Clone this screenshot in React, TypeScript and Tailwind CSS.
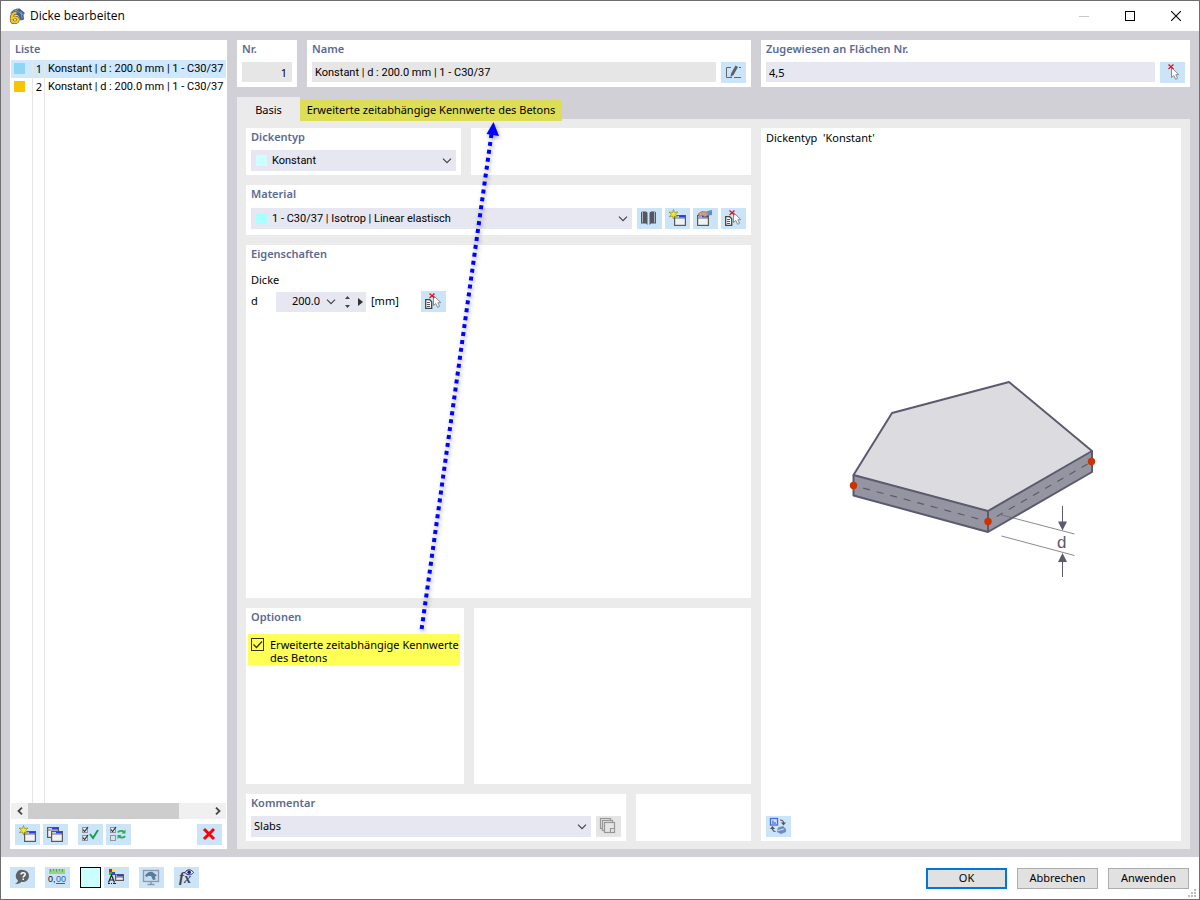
import { useState, type ReactNode } from "react";
import clsx from "clsx";

const THICKNESSES = [
	{ id: 1, color: "#8fd6f5", name: "Konstant | d : 200.0 mm | 1 - C30/37" },
	{ id: 2, color: "#f7c400", name: "Konstant | d : 200.0 mm | 1 - C30/37" },
];

function Panel({
	className,
	children,
}: {
	className?: string;
	children?: ReactNode;
}) {
	return (
		<section className={clsx("bg-white px-[5px] pt-px", className)}>
			{children}
		</section>
	);
}

function Caption({ htmlFor, children }: { htmlFor?: string; children: ReactNode }) {
	const style = "block leading-4 font-semibold text-[#5a6a92]";
	return htmlFor ? (
		<label htmlFor={htmlFor} className={style}>
			{children}
		</label>
	) : (
		<h2 className={style}>{children}</h2>
	);
}

function IconButton({
	label,
	disabled,
	children,
}: {
	label: string;
	disabled?: boolean;
	children: ReactNode;
}) {
	return (
		<button
			type="button"
			aria-label={label}
			disabled={disabled}
			className={clsx(
				"block h-[21px] w-[25px] shrink-0",
				disabled ? "bg-[#e5e5e5]" : "bg-[#cce4f7] hover:bg-[#b5d9f5]",
			)}
		>
			<svg viewBox="0 0 25 21" width="25" height="21" fill="none">
				{children}
			</svg>
		</button>
	);
}

function Chevron({ className }: { className?: string }) {
	return (
		<svg
			viewBox="0 0 10 6"
			fill="none"
			stroke="#444"
			strokeWidth="1.2"
			className={clsx("pointer-events-none h-[6px] w-[10px]", className)}
		>
			<path d="M1 .7l4 4 4-4" />
		</svg>
	);
}

function Combo({
	id,
	value,
	swatch,
}: {
	id: string;
	value: string;
	swatch?: string;
}) {
	return (
		<div className="relative min-w-0 flex-1">
			<select
				id={id}
				className={clsx(
					"block h-[21px] w-full appearance-none bg-[#e7e7f2] pr-5 outline-none",
					swatch ? "pt-px pl-[21px] font-[Roboto,sans-serif]" : "pl-[3px]",
				)}
			>
				<option>{value}</option>
			</select>
			{swatch && (
				<span
					className="pointer-events-none absolute top-[5px] left-[5px] size-[11px]"
					style={{ backgroundColor: swatch }}
				/>
			)}
			<Chevron className="absolute top-2 right-1" />
		</div>
	);
}

/* icon parts */

function Cursor({ x, y }: { x: number; y: number }) {
	return (
		<path
			transform={`translate(${x} ${y})`}
			d="M.5.5v10l2.3-2 1.8 3.8 2-1-1.7-3.6h3z"
			fill="#fff"
			stroke="#858b93"
			strokeWidth="1"
		/>
	);
}

function RedCross() {
	return <path d="M8.5 2.5l5 4.5M13.5 2.5l-5 4.5" stroke="#e4131b" strokeWidth="1.3" />;
}

function MiniWindow({ x, y, w = 12, h = 11 }: { x: number; y: number; w?: number; h?: number }) {
	return (
		<g transform={`translate(${x} ${y})`}>
			<rect x=".6" y=".6" width={w - 1.2} height={h - 1.2} fill="#f1f2f4" stroke="#5a5a5a" strokeWidth="1.2" />
			<path d={`M${w - 7} 1.5h6`} stroke="#2a3cf0" strokeWidth="1.8" />
			<path d={`M1 3h${w - 2}`} stroke="#5a5a5a" strokeWidth=".9" />
		</g>
	);
}

function Star() {
	return (
		<path
			d="M8.5 1.5l1 3 3.5-.6-2.5 2.4 2 2.4-2.9-.7-1.1 3-1-3-3.2.8 2-2.5L4 4l3.5.5z"
			fill="#ffee00"
			stroke="#8d8a35"
			strokeWidth=".7"
		/>
	);
}

function SheetPick() {
	return (
		<>
			<path d="M4.7 8.7h4l2 2v6.6h-6z" fill="#fff" stroke="#444" strokeWidth="1.3" />
			<path d="M6 11.5h3M6 13.5h3M6 15.5h3" stroke="#555" />
			<Cursor x={12} y={4} />
			<RedCross />
		</>
	);
}

function TickBox({ y, checked }: { y: number; checked?: boolean }) {
	return (
		<g transform={`translate(4 ${y})`}>
			<rect x=".5" y=".5" width="5" height="5" fill={checked ? "#dbe9f5" : "#d3e3f0"} stroke="#8f979e" />
			{checked && <path d="M1 2.5l1.6 2L6 0" stroke="#333" strokeWidth="1.2" />}
		</g>
	);
}

function AppLogo() {
	return (
		<svg viewBox="0 0 16 16" width="16" height="16" fill="none">
			<path d="M1 5.5C3.500 1.500 7.500 0 10.500.5L16 5l-1.500 1.500.5 5-3.500 1-2-4.500L4 5z" fill="#3f6296" />
			<path d="M2 4.500l7-3M6 2l8 4.500M12 3.500l1 7" stroke="#91a7c7" strokeWidth=".8" />
			<path
				d="M7.500 4.500C4 5 2.500 8 2.500 11s1.300 3.500 3 3.500S9 13.500 9 11.500s-3.500-3-5.500-1"
				stroke="#6b561a"
				strokeWidth="3.400"
			/>
			<path
				d="M7.500 4.500C4 5 2.500 8 2.500 11s1.300 3.500 3 3.500S9 13.500 9 11.500s-3.500-3-5.500-1"
				stroke="#f3c92d"
				strokeWidth="2.200"
			/>
		</svg>
	);
}

function SlabDrawing() {
	return (
		<svg viewBox="836 371 270 220" width="270" height="220" fill="none">
			<path d="M853.5 475L988 511l104-60v21l-104 60-134.500-36z" fill="#9594a1" />
			<path d="M853.5 475L892 413l117-31 83 69-104 60z" fill="#dcdbe0" />
			<g stroke="#5b5a6e" strokeWidth="2" strokeLinejoin="round">
				<path d="M853.5 475L892 413l117-31 83 69-104 60z" />
				<path d="M853.5 475v20.500L988 532l104-60v-21M988 511v21" />
			</g>
			<path
				d="M853.5 485.500L988 521.500M988 521.500l104-60"
				stroke="#5b5a6e"
				strokeWidth="1.2"
				strokeDasharray="7 7"
				strokeDashoffset="4"
			/>
			<path d="M1000 514.500l74.500 19.500M1001.500 536l73 19.500" stroke="#6a697a" strokeWidth=".8" />
			<path d="M1062.500 506v17M1062.500 577v-17" stroke="#5b5a6e" />
			<path d="M1058 521.500h9l-4.500 9zM1058 562h9l-4.500-9z" fill="#5b5a6e" />
			<text x="1057" y="548" fontSize="17" fill="#5b5a6e" fontFamily="Liberation Sans, sans-serif">
				d
			</text>
			<g fill="#cb3303">
				<circle cx="853.5" cy="485.5" r="3.7" />
				<circle cx="988" cy="521.5" r="3.7" />
				<circle cx="1091.5" cy="461.5" r="3.7" />
			</g>
		</svg>
	);
}

function TitleBar() {
	return (
		<header className="flex h-[30px] items-center bg-white pl-2">
			<AppLogo />
			<h1 className="flex-1 pl-[5px] font-['Open_Sans',sans-serif] text-xs">Dicke bearbeiten</h1>
			<button type="button" aria-label="Minimieren" disabled className="grid h-full w-[46px] place-items-center">
				<span className="h-px w-[10px] bg-[#c8c8c8]" />
			</button>
			<button type="button" aria-label="Maximieren" className="grid h-full w-[46px] place-items-center">
				<span className="size-[10px] border border-black" />
			</button>
			<button type="button" aria-label="Schließen" className="grid h-full w-[46px] place-items-center">
				<svg viewBox="0 0 10 10" width="10" height="10" stroke="#000" strokeWidth="1.1">
					<path d="M0 0l10 10M10 0L0 10" />
				</svg>
			</button>
		</header>
	);
}

function ThicknessList() {
	const [selected, setSelected] = useState(1);

	return (
		<aside className="flex w-[217px] shrink-0 flex-col bg-white px-px pt-px">
			<div className="px-1 pb-[3px]">
				<Caption>Liste</Caption>
			</div>
			<ul>
				{THICKNESSES.map((item) => (
					<li key={item.id}>
						<button
							type="button"
							onClick={() => setSelected(item.id)}
							className={clsx(
								"flex h-[18px] w-full items-stretch text-left leading-[18px]",
								item.id === selected && "bg-[#cde8ff]",
							)}
						>
							<span className="w-[22px] shrink-0 border-r border-[#e6e6e6] pt-[3px] pl-[3px]">
								<span className="block size-[11px]" style={{ backgroundColor: item.color }} />
							</span>
							<span className="w-3 shrink-0 border-r border-[#e6e6e6] pr-[2px] text-right">
								{item.id}
							</span>
							<span className="pl-[3px] font-[Roboto,sans-serif] whitespace-nowrap">{item.name}</span>
						</button>
					</li>
				))}
			</ul>
			<div className="flex flex-1">
				<span className="w-[22px] border-r border-[#e6e6e6]" />
				<span className="w-3 border-r border-[#e6e6e6]" />
			</div>
			<div className="flex h-4 bg-[#f0f0f0]">
				<button type="button" aria-label="Nach links" className="grid w-[17px] place-items-center">
					<svg viewBox="0 0 6 8" width="6" height="8" fill="none" stroke="#444" strokeWidth="1.8">
						<path d="M5 .7L1.5 4 5 7.3" />
					</svg>
				</button>
				<div className="flex-1">
					<div className="h-full w-5/6 bg-[#cdcdcd]" />
				</div>
				<button type="button" aria-label="Nach rechts" className="grid w-[17px] place-items-center">
					<svg viewBox="0 0 6 8" width="6" height="8" fill="none" stroke="#444" strokeWidth="1.8">
						<path d="M1 .7L4.5 4 1 7.3" />
					</svg>
				</button>
			</div>
			<div className="flex gap-[3px] px-1 pt-[5px] pb-1">
				<IconButton label="Neu">
					<MiniWindow x={9} y={7} />
					<Star />
				</IconButton>
				<IconButton label="Kopieren">
					<MiniWindow x={4} y={3} />
					<MiniWindow x={8} y={7} />
				</IconButton>
				<div className="ml-[7px] flex gap-[3px]">
					<IconButton label="Alle auswählen">
						<TickBox y={3} checked />
						<TickBox y={11} checked />
						<path d="M12 10l3 4 5-8" stroke="#14a04a" strokeWidth="1.9" />
					</IconButton>
					<IconButton label="Auswahl umkehren">
						<TickBox y={3} checked />
						<TickBox y={11} />
						<path d="M12 8.5c1-2 4.5-2 6-.5M19 12c-1 2-4.5 2-6 .5" stroke="#2bab5d" strokeWidth="1.8" />
						<path d="M19.5 5.5v4h-4zM11.500 15v-4h4z" fill="#2bab5d" />
					</IconButton>
				</div>
				<div className="ml-auto">
					<IconButton label="Löschen">
						<path d="M7 5l10 10M17 5L7 15" stroke="#fb0007" strokeWidth="3" />
					</IconButton>
				</div>
			</div>
		</aside>
	);
}

function Tabs() {
	return (
		<div role="tablist" className="flex h-[22px]">
			<button type="button" role="tab" aria-selected="true" className="h-[22px] w-[63px] bg-[#ebebeb] pt-1">
				Basis
			</button>
			<button
				type="button"
				role="tab"
				aria-selected="false"
				className="relative mt-[3px] h-[21px] w-[262px] bg-[#dddd56] whitespace-nowrap"
			>
				Erweiterte zeitabhängige Kennwerte des Betons
			</button>
		</div>
	);
}

function Properties() {
	return (
		<Panel className="flex-1">
			<Caption>Eigenschaften</Caption>
			<h3 className="mt-[10px] leading-4">Dicke</h3>
			<div className="mt-[3px] flex items-center">
				<label htmlFor="thickness" className="w-[25px]">
					d
				</label>
				<div className="flex h-5 w-[90px] items-center bg-[#e7e7f2]">
					<input
						id="thickness"
						defaultValue="200.0"
						className="w-11 bg-transparent text-right outline-none"
					/>
					<button type="button" aria-label="Werte" className="ml-[6px]">
						<Chevron />
					</button>
					<button type="button" aria-label="Schrittweite" className="ml-[9px]">
						<svg viewBox="0 0 5 12" width="5" height="12" fill="#444">
							<path d="M2.5 0L5 3H0zM2.5 12L5 9H0z" />
						</svg>
					</button>
					<button type="button" aria-label="Mehr" className="ml-2">
						<svg viewBox="0 0 5 8" width="5" height="8" fill="#333">
							<path d="M0 0l5 4-5 4z" />
						</svg>
					</button>
				</div>
				<span className="w-[55px] pl-[5px]">[mm]</span>
				<IconButton label="Dicke auswählen">
					<SheetPick />
				</IconButton>
			</div>
		</Panel>
	);
}

function Options() {
	const [checked, setChecked] = useState(true);

	return (
		<Panel className="w-[218px]">
			<Caption>Optionen</Caption>
			<label className="mt-[9px] mr-[-1px] ml-[-3px] flex h-[31px] bg-[#ffff55] pt-1 pl-[3px] leading-[13px]">
				<span className="relative size-[13px] shrink-0">
					<input
						type="checkbox"
						checked={checked}
						onChange={() => setChecked(!checked)}
						className="block size-[13px] appearance-none border border-[#33331a]"
					/>
					{checked && (
						<svg
							viewBox="0 0 13 13"
							fill="none"
							stroke="#33331a"
							strokeWidth="1.3"
							className="pointer-events-none absolute inset-0"
						>
							<path d="M2.5 6.5l3 3 5.500-6" />
						</svg>
					)}
				</span>
				<span className="pl-[6px] whitespace-nowrap">
					Erweiterte zeitabhängige Kennwerte
					<br />
					des Betons
				</span>
			</label>
		</Panel>
	);
}

function Footer() {
	const dialogButton = "h-[21px] w-[81px] bg-[#e1e1e1]";
	return (
		<footer className="relative flex h-[42px] items-center bg-white pr-[10px] pl-[9px]">
			<div className="flex gap-[10px] pb-[2px]">
				<IconButton label="Hilfe">
					<path d="M13 3a6 6 0 1 1-1.5 11.800C9.500 17 7 17.300 5 16.500c1.800-.5 2.700-1.500 3-3A6 6 0 0 1 13 3z" fill="#5f6367" />
					<path d="M11 7.500c.2-2.300 4.300-2.300 4.200 0 0 1.400-2 1.500-2 3M13.200 11.500V13" stroke="#fff" strokeWidth="1.5" />
				</IconButton>
				<IconButton label="Einheiten">
					<rect x="4" y="2" width="16" height="5" fill="#98d485" />
					<path d="M5.500 2v3M8.500 2v2M11.500 2v3M14.500 2v2M17.500 2v3" stroke="#5a9a4b" strokeWidth=".8" />
					<text x="3" y="15" fontSize="9" fontFamily="Liberation Sans, sans-serif" fill="#111">
						0,
					</text>
					<text x="11" y="15" fontSize="9" fontFamily="Liberation Sans, sans-serif" fill="#2c62c4">
						00
					</text>
					<path d="M11 16.500h9" stroke="#2c62c4" />
				</IconButton>
				<div className="flex gap-[3px]">
					<button
						type="button"
						aria-label="Farbe"
						className="size-[21px] border border-black bg-[#ccffff]"
					/>
					<IconButton label="Darstellung">
						<path d="M5 2h3v3H5z" fill="#e11" />
						<path d="M8 2h3v3H8z" fill="#fe0" />
						<path d="M5 5h3v3H5z" fill="#2b3" />
						<path d="M8 5h3v3H8z" fill="#34e" />
						<path d="M4.500 15.500L7.500 8l3 7.500M5.500 13h4M4 16.500h2M7 16.500h1M9 16.500h3" stroke="#222" strokeWidth="1.2" />
						<MiniWindow x={11} y={7} w={9} h={7} />
					</IconButton>
				</div>
				<IconButton label="Ansicht">
					<rect x="4.500" y="3.500" width="15" height="11" fill="#c7dcec" stroke="#8b98a5" strokeWidth="1.3" />
					<path d="M6 8.500C8 5 11 4 13.500 5L18 8.500l-2 1 .5 3-2.500.5-2-4-3.500 0-.5 1.500z" fill="#557d9f" />
					<path d="M12 15v2.500M8.500 17.500h7" stroke="#8b98a5" strokeWidth="1.5" />
				</IconButton>
				<IconButton label="Formel">
					<g fontStyle="italic" fontWeight="bold" fontFamily="Liberation Serif, serif" fill="#3d4247">
						<text x="5" y="15" fontSize="15">
							f
						</text>
						<text x="10" y="16" fontSize="14">
							x
						</text>
					</g>
					<path d="M11 5.500c2-3.500 6.500-3.500 8.500 0-2 3-6.500 3-8.500 0z" fill="#e7effa" stroke="#25256b" />
					<circle cx="15.2" cy="5.200" r="1.800" fill="#25256b" />
				</IconButton>
			</div>
			<div className="ml-auto flex gap-[10px]">
				<button type="button" className={clsx(dialogButton, "border-2 border-[#0078d7]")}>
					OK
				</button>
				<button type="button" className={clsx(dialogButton, "border border-[#adadad]")}>
					Abbrechen
				</button>
				<button type="button" className={clsx(dialogButton, "border border-[#adadad]")}>
					Anwenden
				</button>
			</div>
			<svg viewBox="0 0 8 8" width="8" height="8" fill="#bdbdbd" className="absolute right-[3px] bottom-[2px]">
				<path d="M6 0h2v2H6zM3 3h2v2H3zM6 3h2v2H6zM0 6h2v2H0zM3 6h2v2H3zM6 6h2v2H6z" />
			</svg>
		</footer>
	);
}

/* Dotted pointer from the option to the tab it enables. */
function PointerArrow() {
	return (
		<svg
			viewBox="0 0 90 520"
			width="90"
			height="520"
			fill="none"
			className="pointer-events-none absolute top-[-13px] left-[163px] drop-shadow-[1px_2px_2px_rgba(0,0,0,0.35)]"
		>
			<path d="M82.500 19L12.500 515" stroke="#0000ff" strokeWidth="4" strokeDasharray="4 4" />
			<path d="M84.500 7l5.500 14-12.500-2z" fill="#0000ff" />
		</svg>
	);
}

export default function App() {
	return (
		<div className="flex min-h-screen flex-col border border-[#6e6e70] bg-white font-['Noto_Sans',sans-serif] text-[11px] text-black">
			<TitleBar />
			<main className="flex flex-1 gap-[10px] bg-[#d1d0d6] px-[9px] pt-[9px] pb-2">
				<ThicknessList />
				<div className="flex min-w-0 flex-1 flex-col">
					<div className="grid grid-cols-[514fr_429fr] gap-[10px]">
						<div className="flex gap-[10px]">
							<Panel className="w-[60px] pb-[5px]">
								<Caption htmlFor="number">Nr.</Caption>
								<input
									id="number"
									readOnly
									value="1"
									className="mt-[5px] block h-5 w-full bg-[#e6e6e6] pr-[5px] text-right outline-none"
								/>
							</Panel>
							<Panel className="min-w-0 flex-1">
								<Caption htmlFor="name">Name</Caption>
								<div className="mt-[5px] flex gap-[5px]">
									<input
										id="name"
										readOnly
										value="Konstant | d : 200.0 mm | 1 - C30/37"
										className="h-5 min-w-0 flex-1 bg-[#e6e6e6] pl-[3px] font-[Roboto,sans-serif] outline-none"
									/>
									<IconButton label="Name bearbeiten">
										<path d="M10 5.500H5.500v10H11M13 15.500h7M18 5.500h2" stroke="#666" />
										<path d="M14.500 3.500l2.500 1.500-4.500 8-3 2 .5-3.500z" fill="#5c6064" />
									</IconButton>
								</div>
							</Panel>
						</div>
						<Panel>
							<Caption htmlFor="surfaces">Zugewiesen an Flächen Nr.</Caption>
							<div className="mt-[5px] flex gap-[5px]">
								<input
									id="surfaces"
									defaultValue="4,5"
									className="h-5 min-w-0 flex-1 bg-[#e7e7f2] pl-[3px] outline-none"
								/>
								<IconButton label="Flächen auswählen">
									<Cursor x={11} y={5} />
									<RedCross />
								</IconButton>
							</div>
						</Panel>
					</div>

					<div className="mt-[10px]">
						<Tabs />
					</div>
					<div className="grid flex-1 grid-cols-[505fr_420fr] gap-[10px] bg-[#ebebeb] px-[9px] pt-[9px] pb-2">
						<div className="relative flex flex-col gap-[10px]">
							<div className="flex gap-[10px]">
								<Panel className="w-[215px] pb-1">
									<Caption htmlFor="type">Dickentyp</Caption>
									<div className="mt-[5px] flex">
										<Combo id="type" value="Konstant" swatch="#ccffff" />
									</div>
								</Panel>
								<Panel className="flex-1" />
							</div>
							<Panel className="pb-[6px]">
								<Caption htmlFor="material">Material</Caption>
								<div className="mt-[6px] flex gap-[5px]">
									<Combo
										id="material"
										value="1 - C30/37 | Isotrop | Linear elastisch"
										swatch="#aaffff"
									/>
									<div className="flex gap-[3px]">
										<IconButton label="Bibliothek">
											<path d="M5 3.500h4l1.500 1.200V17L9 15.500H4V4.500zM18 3.500h-4l-1.500 1.200V17l1.500-1.500h5V4.500z" fill="#54585c" />
											<path d="M5.500 3.500v11M17.500 3.500v11" stroke="#b9ccdb" strokeWidth=".8" />
										</IconButton>
										<IconButton label="Neues Material">
											<MiniWindow x={9} y={7} />
											<Star />
										</IconButton>
										<IconButton label="Material bearbeiten">
											<MiniWindow x={4} y={7} />
											<path d="M5 6l4-2.500 5 .5 1.500 3-4 2L10 7.500l-3.500 1z" fill="#c99d82" stroke="#8f6c58" strokeWidth=".7" />
											<path d="M14 3l5-1v5l-3.500.5z" fill="#5e8fc0" />
										</IconButton>
										<IconButton label="Material auswählen">
											<SheetPick />
										</IconButton>
									</div>
								</div>
							</Panel>
							<Properties />
							<div className="flex h-44 gap-[10px]">
								<Options />
								<Panel className="flex-1" />
							</div>
							<div className="flex gap-[10px]">
								<Panel className="w-[380px] pb-1">
									<Caption htmlFor="comment">Kommentar</Caption>
									<div className="mt-[5px] flex gap-[5px]">
										<Combo id="comment" value="Slabs" />
										<IconButton label="Kommentare" disabled>
											<g stroke="#979797" fill="#e5e5e5" strokeWidth="1.2">
												<rect x="4.500" y="2.500" width="10" height="10" />
												<rect x="6.500" y="4.500" width="10" height="10" />
												<rect x="8.500" y="6.500" width="10" height="10" />
												<path d="M14.500 16.500v-4h4" />
											</g>
										</IconButton>
									</div>
								</Panel>
								<Panel className="flex-1" />
							</div>
							<PointerArrow />
						</div>
						<Panel className="flex flex-col pb-1">
							<h2 className="mt-px leading-4 whitespace-pre">Dickentyp  'Konstant'</h2>
							<div className="grid flex-1 place-items-center">
								<SlabDrawing />
							</div>
							<IconButton label="Ansicht wechseln">
								<rect x="4.500" y="2.500" width="7" height="6.500" fill="#dbe6fa" stroke="#3f6fdc" strokeWidth="1.3" />
								<path d="M7 8V4.500M9 8V6" stroke="#3f6fdc" strokeWidth="1.3" />
								<path d="M14 4c2 0 3.500 1 3.500 3M6.500 12c0 2.500 1.500 3.500 3 3.500" stroke="#555" strokeWidth="1.2" />
								<path d="M15 6.500h5l-2.500 3zM4 13h5l-2.500-3z" fill="#555" />
								<path d="M12 11.500l5-1.500 3 3v3l-5 2-4-2z" fill="#6c8fbe" />
								<path d="M12 14.500l6-1.500" stroke="#d3e1f0" />
							</IconButton>
						</Panel>
					</div>
				</div>
			</main>
			<Footer />
		</div>
	);
}
